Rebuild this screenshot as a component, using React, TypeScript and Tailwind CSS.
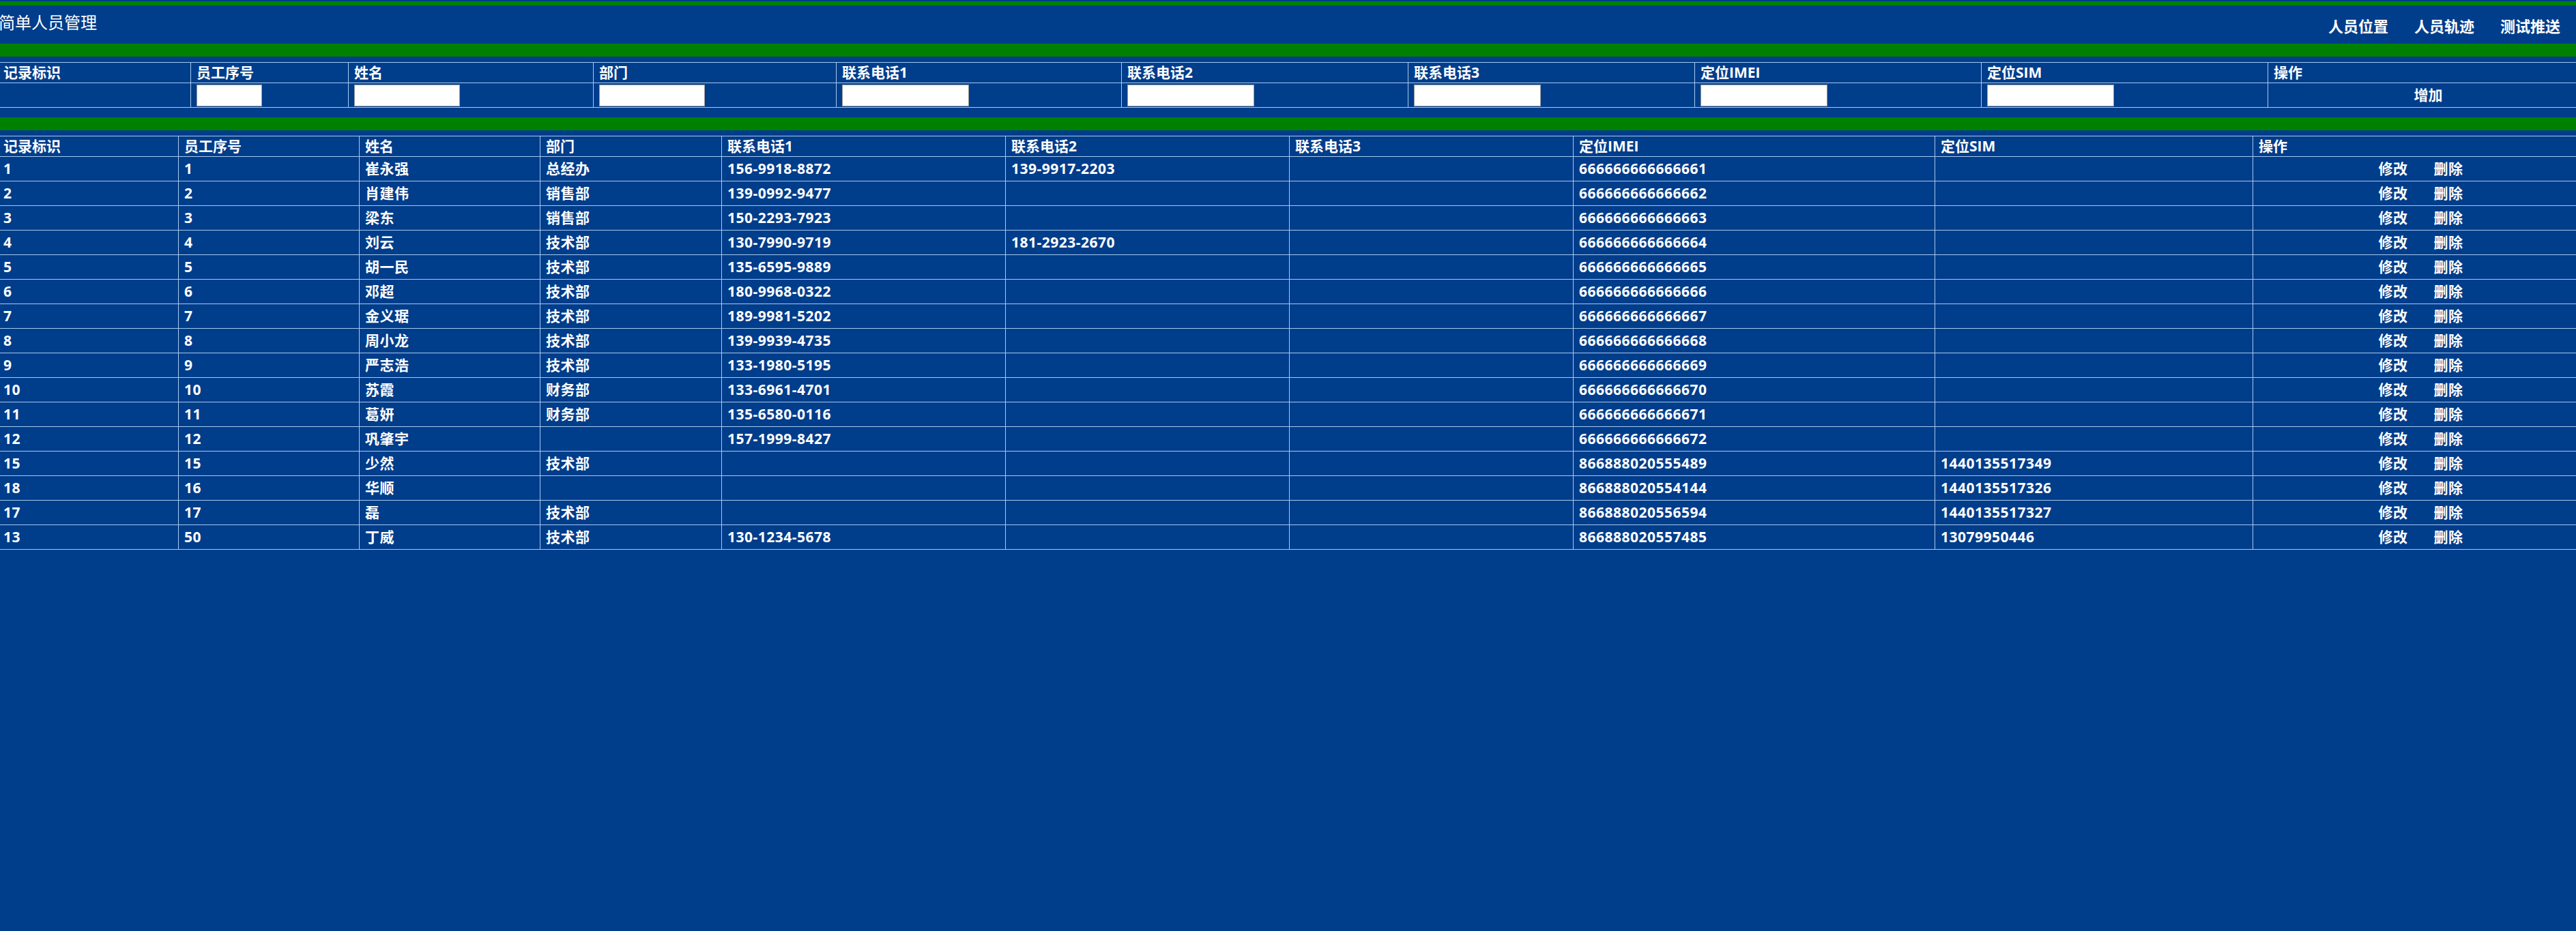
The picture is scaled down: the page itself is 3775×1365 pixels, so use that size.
const font = "font-['Open_Sans','Noto_Sans_CJK_SC',sans-serif]";

const formCols = "grid-cols-[279px_231px_359px_356px_418px_420px_420px_420px_420px_1fr]";
const listCols = "grid-cols-[261px_265px_265px_266px_416px_416px_416px_530px_466px_1fr]";

const headers = ["记录标识", "员工序号", "姓名", "部门", "联系电话1", "联系电话2", "联系电话3", "定位IMEI", "定位SIM", "操作"];

// input widths per column in the add form (null = no input)
const inputWidths: (string | null)[] = [null, "w-[96px]", "w-[155px]", "w-[155px]", "w-[186px]", "w-[186px]", "w-[186px]", "w-[186px]", "w-[186px]"];

const people: string[][] = [
  ["1", "1", "崔永强", "总经办", "156-9918-8872", "139-9917-2203", "", "666666666666661", ""],
  ["2", "2", "肖建伟", "销售部", "139-0992-9477", "", "", "666666666666662", ""],
  ["3", "3", "梁东", "销售部", "150-2293-7923", "", "", "666666666666663", ""],
  ["4", "4", "刘云", "技术部", "130-7990-9719", "181-2923-2670", "", "666666666666664", ""],
  ["5", "5", "胡一民", "技术部", "135-6595-9889", "", "", "666666666666665", ""],
  ["6", "6", "邓超", "技术部", "180-9968-0322", "", "", "666666666666666", ""],
  ["7", "7", "金义琚", "技术部", "189-9981-5202", "", "", "666666666666667", ""],
  ["8", "8", "周小龙", "技术部", "139-9939-4735", "", "", "666666666666668", ""],
  ["9", "9", "严志浩", "技术部", "133-1980-5195", "", "", "666666666666669", ""],
  ["10", "10", "苏霞", "财务部", "133-6961-4701", "", "", "666666666666670", ""],
  ["11", "11", "葛妍", "财务部", "135-6580-0116", "", "", "666666666666671", ""],
  ["12", "12", "巩肇宇", "", "157-1999-8427", "", "", "666666666666672", ""],
  ["15", "15", "少然", "技术部", "", "", "", "866888020555489", "1440135517349"],
  ["18", "16", "华顺", "", "", "", "", "866888020554144", "1440135517326"],
  ["17", "17", "磊", "技术部", "", "", "", "866888020556594", "1440135517327"],
  ["13", "50", "丁威", "技术部", "130-1234-5678", "", "", "866888020557485", "13079950446"],
];

function Cell({ index, children, className = "" }: { index: number; children?: React.ReactNode; className?: string }) {
  return (
    <div
      className={`flex items-center min-w-0 overflow-hidden whitespace-nowrap ${
        index === 0 ? "pl-[5px]" : "pl-[8px] border-l border-[#a6caf0]"
      } ${className}`}
    >
      {children}
    </div>
  );
}

function HeaderRow({ cols }: { cols: string }) {
  return (
    <div className={`grid ${cols} h-[30px] border-b border-[#a6caf0] font-bold text-[21px]`}>
      {headers.map((h, i) => (
        <Cell key={h} index={i}>
          {h}
        </Cell>
      ))}
    </div>
  );
}

function Ops({ children }: { children: React.ReactNode }) {
  return (
    <div className="flex items-center justify-center gap-[38px] border-l border-[#a6caf0] pl-[18px] whitespace-nowrap">
      {children}
    </div>
  );
}

export default function App() {
  return (
    <div className={`min-h-screen w-full bg-[#003d8b] text-white ${font}`}>
      {/* top strip */}
      <div className="h-[2px]" />
      <div className="h-[6px] bg-[#008000]" />

      <header className="h-[56px] flex items-center justify-between">
        <h1 className="text-[24px] font-normal leading-[32px] mb-[7px] -ml-[2px]">简单人员管理</h1>
        <nav className="flex items-center gap-[38px] pr-[23px] mt-[4px] text-[22px] font-bold">
          <a>人员位置</a>
          <a>人员轨迹</a>
          <a>测试推送</a>
        </nav>
      </header>

      <div className="h-[19px] bg-[#008000]" />
      <div className="h-[8px]" />

      {/* add form */}
      <div className="border-t border-[#a6caf0]">
        <HeaderRow cols={formCols} />
        <div className={`grid ${formCols} h-[36px] border-b border-[#a6caf0] font-bold text-[21px]`}>
          {inputWidths.map((w, i) => (
            <Cell key={i} index={i}>
              {w && <input className={`${w} h-[32px] bg-white border border-[#9a9a9a] outline-none`} />}
            </Cell>
          ))}
          <Ops>
            <a>增加</a>
          </Ops>
        </div>
      </div>

      <div className="h-[14px]" />
      <div className="h-[19px] bg-[#008000]" />
      <div className="h-[8px]" />

      {/* list */}
      <div className="border-t border-[#a6caf0]">
        <HeaderRow cols={listCols} />
        {people.map((p) => (
          <div
            key={p[0] + p[1]}
            className={`grid ${listCols} h-[36px] border-b border-[#a6caf0] font-bold text-[21px] tracking-[0.5px]`}
          >
            {p.map((v, i) => (
              <Cell key={i} index={i}>
                {v}
              </Cell>
            ))}
            <Ops>
              <a>修改</a>
              <a>删除</a>
            </Ops>
          </div>
        ))}
      </div>
    </div>
  );
}
